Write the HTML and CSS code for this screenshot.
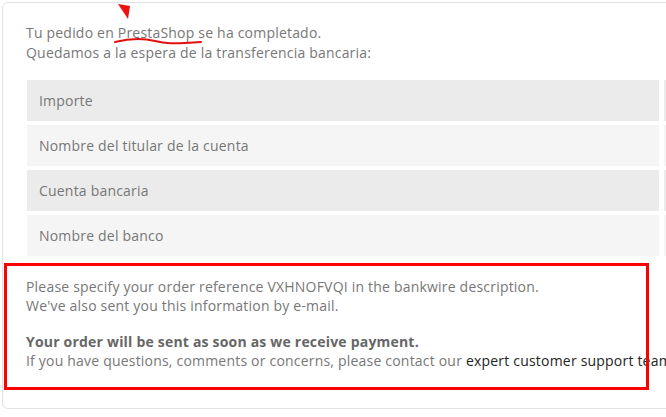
FILE: index.html
```html
<!DOCTYPE html>
<html lang="es">
<head>
  <meta charset="UTF-8">
  <meta name="viewport" content="width=device-width, initial-scale=1.0">
  <title>Pedido confirmado</title>
  <link rel="stylesheet" href="styles.css">
</head>
<body>
  <div class="card">
    <p class="intro">
      Tu pedido en <span class="shop">PrestaShop</span> se ha completado.<br>
      Quedamos a la espera de la transferencia bancaria:
    </p>

    <div class="bank-table">
      <div class="cell odd">Importe</div>
      <div class="cell odd"></div>
      <div class="cell even">Nombre del titular de la cuenta</div>
      <div class="cell even"></div>
      <div class="cell odd">Cuenta bancaria</div>
      <div class="cell odd"></div>
      <div class="cell even">Nombre del banco</div>
      <div class="cell even"></div>
    </div>

    <div class="notice">
      <p>
        Please specify your order reference VXHNOFVQI in the bankwire description.<br>
        We've also sent you this information by e-mail.
      </p>
      <p>
        <strong>Your order will be sent as soon as we receive payment.</strong><br>
        If you have questions, comments or concerns, please contact our <a href="#" class="support">expert customer support team</a>.
      </p>
    </div>
  </div>

  <!-- annotations drawn over the page -->
  <svg class="mark-arrow" width="14" height="16" viewBox="0 0 14 16">
    <polygon points="0,0 12,2 10,15" fill="#ee1111"/>
  </svg>
  <svg class="mark-line" width="90" height="8" viewBox="0 0 90 8">
    <path d="M2 5 C 14 2, 30 1, 42 4 S 60 6.5, 80 5.5 L 88 5" fill="none" stroke="#e31010" stroke-width="2" stroke-linecap="round"/>
  </svg>
  <div class="mark-box"></div>
</body>
</html>
```

FILE: styles.css
```css
:root {
  --text: #777777;
  --dark: #232323;
  --row-odd: #ebebeb;
  --row-even: #f5f5f5;
  --red: #ff0000;
}
body {
  margin: 0;
  padding: 2px;
  font-family: 'Open Sans', sans-serif;
  font-size: 14px;
  line-height: 19px;
  letter-spacing: 0.2px;
  color: var(--text);
  overflow: hidden;
  width: 720px;
}
.card {
  border: 1px solid #e2e2e2;
  border-radius: 6px;
  padding: 20px 23px 38px 23px;
}
.intro {
  margin: 0 0 17px 0;
  line-height: 20px;
}
.bank-table {
  display: grid;
  grid-template-columns: 632px 1fr;
  column-gap: 5px;
  row-gap: 4px;
  margin-left: 1px;
}
.cell {
  height: 41px;
  padding-left: 12px;
  display: flex;
  align-items: center;
}
.odd {
  background-color: var(--row-odd);
}
.even {
  background-color: var(--row-even);
}
.notice {
  margin-top: 21px;
}
.notice p {
  margin: 0 0 17px 0;
  white-space: nowrap;
}
.notice p:last-child {
  margin-bottom: 0;
}
.notice strong {
  color: #666666;
}
.support {
  color: var(--dark);
  text-decoration: none;
}
.mark-arrow {
  position: absolute;
  left: 118px;
  top: 4px;
}
.mark-line {
  position: absolute;
  left: 113px;
  top: 37px;
}
.mark-box {
  position: absolute;
  left: 4px;
  top: 263px;
  width: 639px;
  height: 121px;
  border: 3px solid var(--red);
}
```
